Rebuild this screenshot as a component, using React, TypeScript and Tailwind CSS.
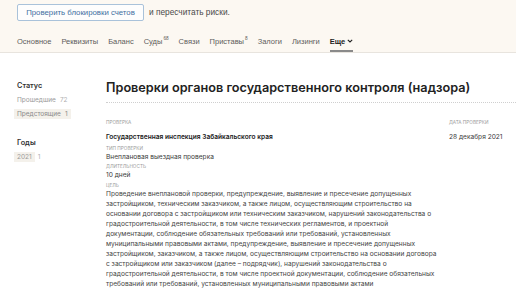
import React from 'react';

const tabs = [
  { label: 'Основное' },
  { label: 'Реквизиты' },
  { label: 'Баланс' },
  { label: 'Суды', sup: '68' },
  { label: 'Связи' },
  { label: 'Приставы', sup: '8' },
  { label: 'Залоги' },
  { label: 'Лизинги' },
];

// lines broken as in the source page
const goalLines = [
  'Проведение внеплановой проверки, предупреждение, выявление и пресечение допущенных',
  'застройщиком, техническим заказчиком, а также лицом, осуществляющим строительство на',
  'основании договора с застройщиком или техническим заказчиком, нарушений законодательства о',
  'градостроительной деятельности, в том числе технических регламентов, и проектной',
  'документации, соблюдение обязательных требований или требований, установленных',
  'муниципальными правовыми актами, предупреждение, выявление и пресечение допущенных',
  'застройщиком, заказчиком, а также лицом, осуществляющим строительство на основании договора',
  'с застройщиком или заказчиком (далее – подрядчик), нарушений законодательства о',
  'градостроительной деятельности, в том числе проектной документации, соблюдение обязательных',
  'требований или требований, установленных муниципальными правовыми актами',
];

function Label({ children }: { children: React.ReactNode }) {
  return <div className="text-[4.7px] uppercase leading-[7px] text-[#9a9a9a]">{children}</div>;
}

export default function App() {
  return (
    <div className="w-[516px] h-[290px] overflow-hidden bg-white text-[#222]" style={{ fontFamily: 'Inter, "Noto Sans", sans-serif' }}>
      {/* Header */}
      <div className="bg-[#fcf8f2] border-b border-[#e8e4de] px-[17px]" style={{ fontFamily: '"Liberation Sans", Arial, sans-serif' }}>
        <div className="flex items-center gap-[5px] pt-[4px]">
          <button className="h-[17px] w-[127px] border border-[#a9c2da] bg-[#fdfdfd] rounded-[2px] text-[7.8px] text-[#3f6f9f]">
            Проверить блокировки счетов
          </button>
          <span className="text-[8.3px] text-[#4a4a4a]">и пересчитать риски.</span>
        </div>
        <div className="flex items-end gap-[10px] mt-[11px] h-[20px] text-[7.5px] leading-[9px] text-[#5c5c5c]">
          {tabs.map((t) => (
            <div key={t.label} className="pb-[6.5px] flex items-start">
              {t.label}
              {t.sup && <span className="text-[4.7px] leading-[5px] ml-[1px] -mt-[1px]">{t.sup}</span>}
            </div>
          ))}
          <div className="pb-[4.5px] border-b-2 border-[#8a8a8a] text-[#222] font-bold flex items-center gap-[2px]">
            Еще
            <svg width="6" height="4" viewBox="0 0 6 4" fill="none">
              <path d="M0.8 0.8 L3 3 L5.2 0.8" stroke="#222" strokeWidth="1.1" />
            </svg>
          </div>
        </div>
      </div>

      <div className="flex">
        {/* Sidebar */}
        <div className="w-[106px] pl-[17px] pt-[28px] shrink-0 text-[6.5px] leading-[10px]">
          <div className="text-[7.3px] font-semibold text-[#333]">Статус</div>
          <div className="mt-[4px] text-[#9a9a9a] flex gap-[4px]">
            <span>Прошедшие</span>
            <span className="text-[#b0b0b0]">72</span>
          </div>
          <div className="mt-[4px] -ml-[3px] inline-flex gap-[4px] bg-[#f4f1eb] px-[3px] text-[#8a8a8a]">
            <span>Предстоящие</span>
            <span>1</span>
          </div>
          <div className="mt-[19px] text-[7.3px] font-semibold text-[#333]">Годы</div>
          <div className="mt-[4px] -ml-[3px] flex gap-[3px] text-[#9a9a9a]">
            <span className="bg-[#f4f1eb] px-[3px]">2021</span>
            <span className="text-[#b0b0b0]">1</span>
          </div>
        </div>

        {/* Main */}
        <div className="flex-1 pt-[27px]">
          <h1 className="text-[12.7px] font-semibold text-[#222] leading-[16px] whitespace-nowrap">
            Проверки органов государственного контроля (надзора)
          </h1>
          <div className="mt-[6px] border-b border-dotted border-[#cfcfcf]" />

          <div className="flex mt-[16px] text-[6.6px] leading-[10px]">
            <div className="w-[343px]">
              <Label>Проверка</Label>
              <div className="mt-[6px] font-semibold text-[#222]">
                Государственная инспекция Забайкальского края
              </div>
              <div className="mt-[3px]">
                <Label>Тип проверки</Label>
              </div>
              <div className="text-[#3a3a3a]">Внеплановая выездная проверка</div>
              <div className="mt-[1px]">
                <Label>Длительность</Label>
              </div>
              <div className="text-[#3a3a3a]">10 дней</div>
              <div className="mt-[2px]">
                <Label>Цель</Label>
              </div>
              <p className="text-[#444] whitespace-nowrap">
                {goalLines.map((l, i) => (
                  <React.Fragment key={i}>
                    {l}
                    {i < goalLines.length - 1 && <br />}
                  </React.Fragment>
                ))}
              </p>
            </div>
            <div>
              <Label>Дата проверки</Label>
              <div className="mt-[6px] text-[#3a3a3a]">28 декабря 2021</div>
            </div>
          </div>
        </div>
      </div>
    </div>
  );
}
